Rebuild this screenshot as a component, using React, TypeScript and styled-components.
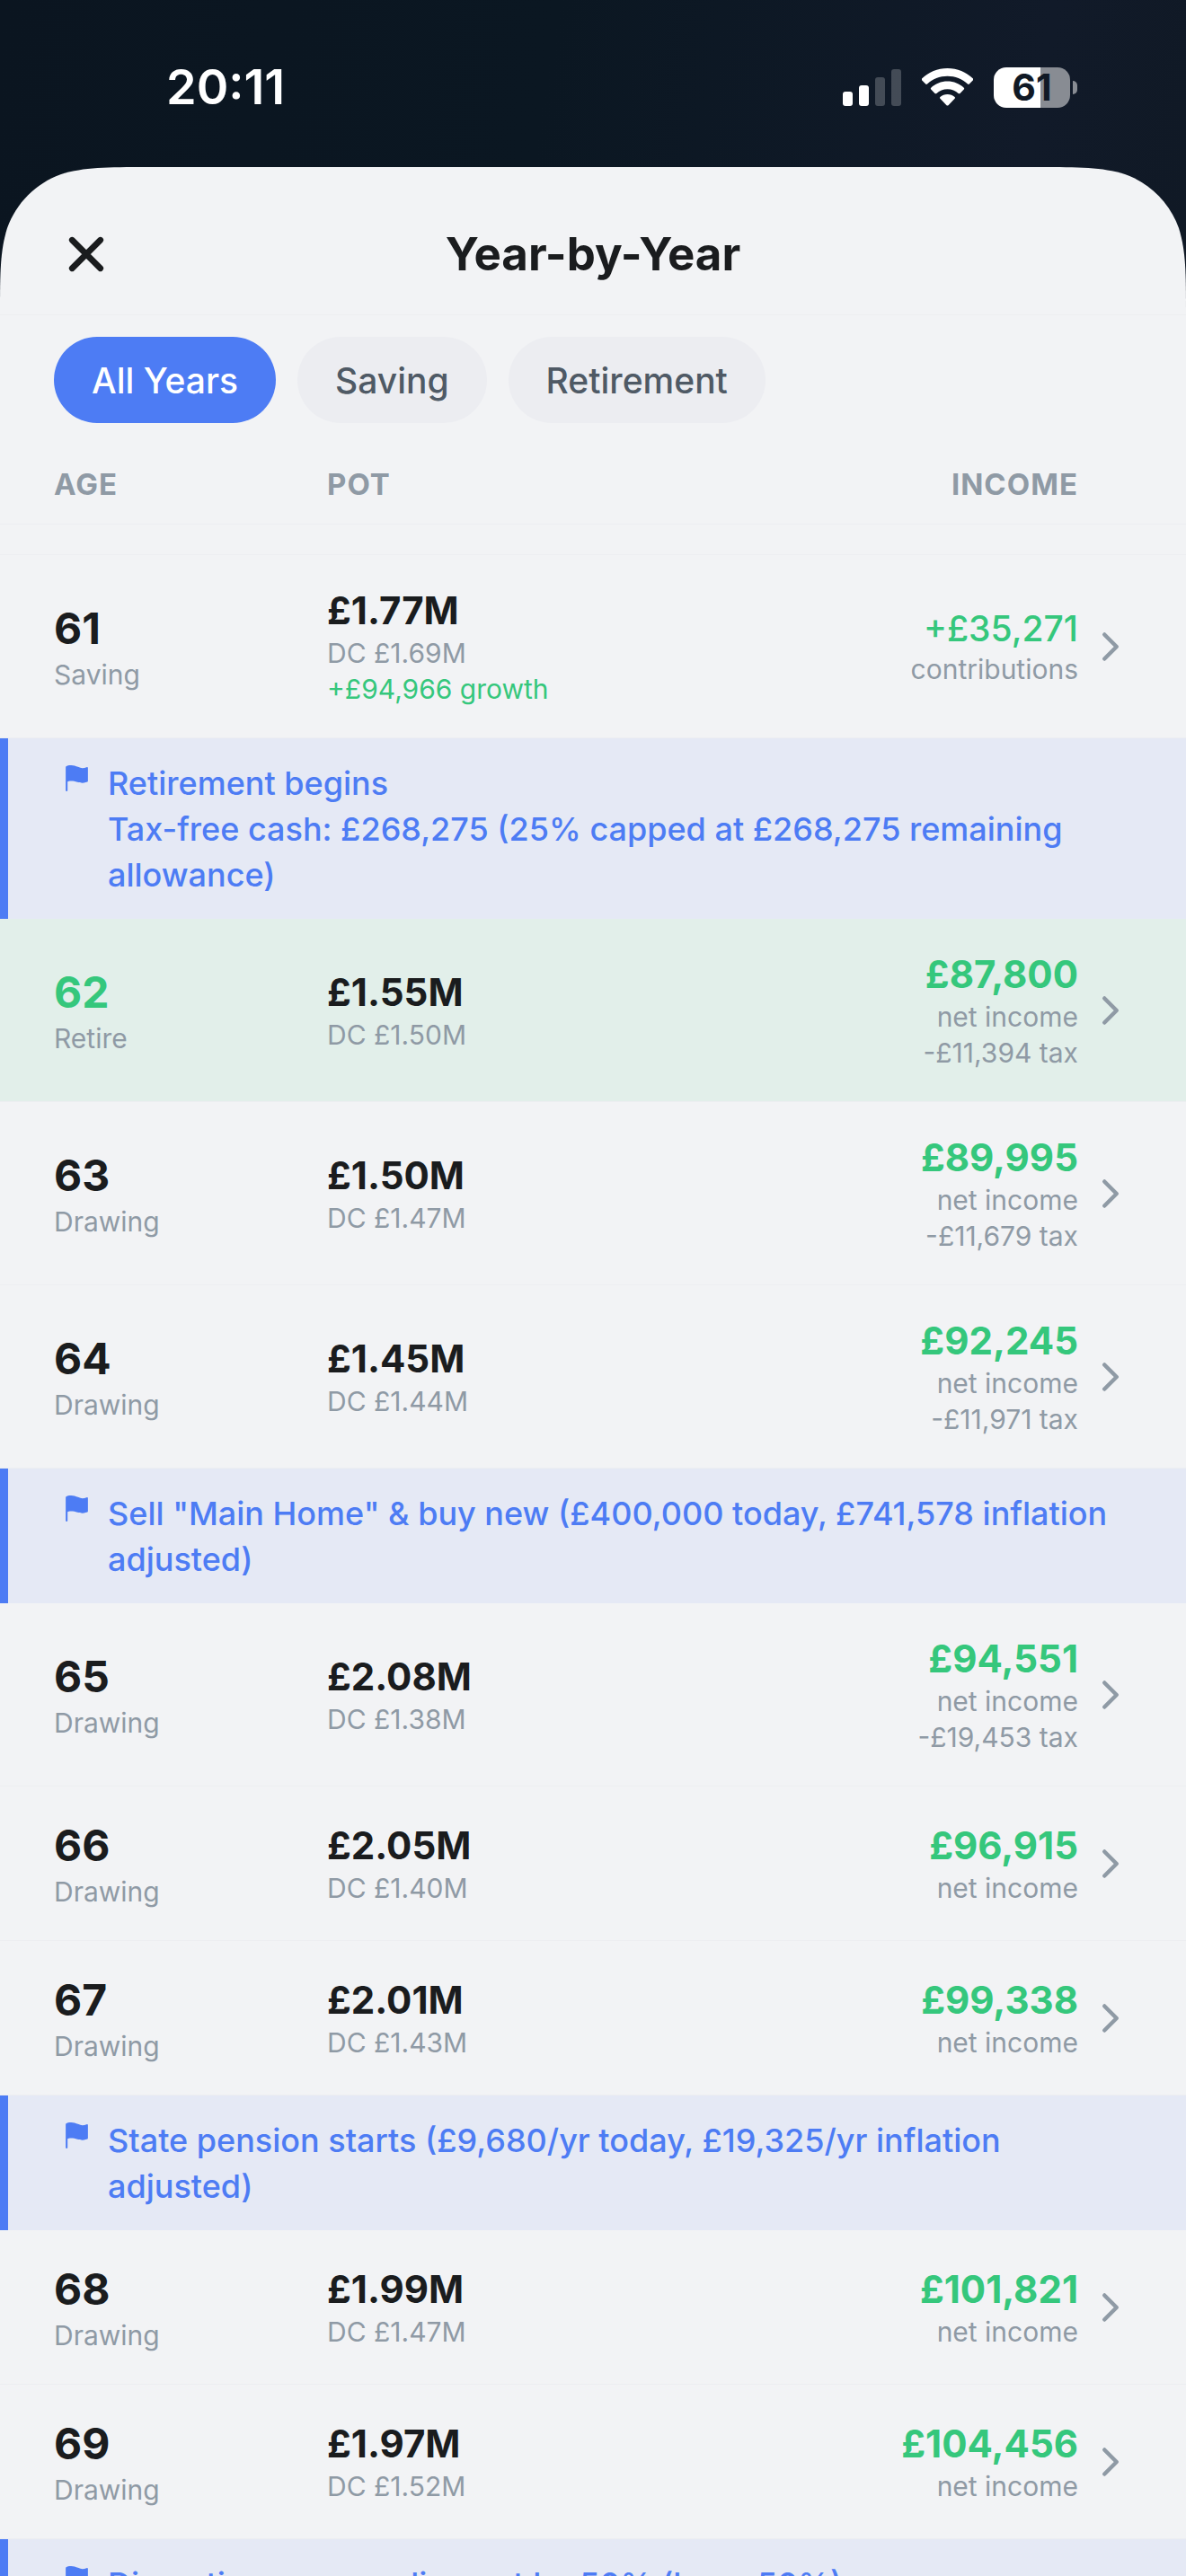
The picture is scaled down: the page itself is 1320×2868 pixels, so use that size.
import React, { useState } from "react";
import styled, { createGlobalStyle } from "styled-components";
import { IoFlag } from "react-icons/io5";

const color = {
  sheet: "#f2f3f5",
  line: "#edeef1",
  chip: "#ecedf1",
  ink: "#1a1c1e",
  slate: "#4f5a65",
  muted: "#8f9aa5",
  blue: "#4d7cf4",
  blueTint: "#e5e9f5",
  green: "#35c77c",
  greenTint: "#e2efea",
};

const GlobalStyle = createGlobalStyle`
  * { box-sizing: border-box; }
  html, body, #root { height: 100%; }
  body {
    margin: 0;
    overflow: hidden;
    background: ${color.sheet};
    color: ${color.ink};
    font-family: Inter, "Liberation Sans", sans-serif;
  }
  h1, p { margin: 0; }
  button { font: inherit; border: 0; padding: 0; background: none; cursor: pointer; }
`;

const Screen = styled.div`
  display: flex;
  flex-direction: column;
  height: 100vh;
  overflow: hidden;
  background: ${color.sheet};
`;

const Backdrop = styled.div`
  background: linear-gradient(100deg, #0b1520 0%, #0b1722 45%, #111a29 85%, #101925 100%);
`;

const StatusBar = styled.div`
  display: flex;
  align-items: center;
  justify-content: space-between;
  height: 186px;
  padding: 8px 121px 0 185px;
  color: #fff;
`;

const Clock = styled.time`
  font-size: 54px;
  font-weight: 600;
  line-height: 64px;
`;

const StatusIcons = styled.div`
  display: flex;
  align-items: center;
  gap: 23px;
`;

const Battery = styled.div`
  display: flex;
  align-items: center;
  gap: 3px;
`;

const BatteryBody = styled.div`
  display: grid;
  place-items: center;
  width: 85px;
  height: 45px;
  border-radius: 14px;
  background: linear-gradient(90deg, #fff 61%, #888c93 61%);
  color: #101925;
  font-size: 41px;
  font-weight: 700;
  line-height: 45px;
`;

const BatteryTip = styled.div`
  width: 5px;
  height: 15px;
  border-radius: 0 5px 5px 0;
  background: #888c93;
`;

const SheetHeader = styled.header`
  position: relative;
  display: grid;
  grid-template-columns: 72px 1fr 72px;
  align-items: center;
  padding: 61px 60px 31px;
`;

const SheetTop = styled.div`
  position: absolute;
  inset: 0;
  display: flex;
  svg { flex: none; display: block; }
`;

const SheetTopFill = styled.div`
  flex: 1;
  background: ${color.sheet};
`;

const FlippedCorner = styled.svg`
  transform: scaleX(-1);
`;

const CloseButton = styled.button`
  position: relative;
  width: 72px;
  height: 72px;
  color: ${color.ink};
  svg { display: block; }
`;

const Title = styled.h1`
  position: relative;
  text-align: center;
  font-size: 51px;
  font-weight: 700;
  line-height: 62px;
`;

const Filters = styled.div`
  position: relative;
  display: flex;
  gap: 24px;
  padding: 24px 60px;
  border-top: 1px solid ${color.line};
`;

const Chip = styled.button<{ $active: boolean }>`
  height: 96px;
  padding: 0 42px;
  border-radius: 48px;
  background: ${(p) => (p.$active ? color.blue : color.chip)};
  color: ${(p) => (p.$active ? "#fff" : color.slate)};
  font-size: 39px;
  font-weight: 500;
  line-height: 47px;
`;

const columns = "304px 1fr auto 48px";

const ColumnHeads = styled.div`
  display: grid;
  grid-template-columns: ${columns};
  padding: 24px 60px;
  border-bottom: 1px solid ${color.line};
  color: ${color.muted};
  font-size: 33px;
  font-weight: 700;
  line-height: 40px;
  letter-spacing: 1px;
`;

const IncomeHead = styled.span`
  padding-right: 12px;
`;

const List = styled.div`
  margin-top: 33px;
  border-top: 1px solid ${color.line};
`;

const YearRow = styled.button<{ $highlight: boolean }>`
  display: grid;
  grid-template-columns: ${columns};
  align-items: center;
  width: 100%;
  padding: 36px 60px;
  border-bottom: 1px solid ${color.line};
  background: ${(p) => (p.$highlight ? color.greenTint : "transparent")};
  color: ${color.ink};
  text-align: left;
  svg { display: block; color: ${color.muted}; }
`;

const Cell = styled.span<{ $end?: boolean }>`
  display: flex;
  flex-direction: column;
  gap: 4px;
  align-items: ${(p) => (p.$end ? "flex-end" : "flex-start")};
  padding-right: ${(p) => (p.$end ? "12px" : "0")};
`;

const Age = styled.span<{ $highlight: boolean }>`
  color: ${(p) => (p.$highlight ? color.green : color.ink)};
  font-size: 48px;
  font-weight: 700;
  line-height: 59px;
`;

const Amount = styled.span<{ $green?: boolean }>`
  color: ${(p) => (p.$green ? color.green : color.ink)};
  font-size: 42px;
  font-weight: 700;
  line-height: 51px;
`;

const Contribution = styled.span`
  color: ${color.green};
  font-size: 39px;
  font-weight: 500;
  line-height: 47px;
`;

const Note = styled.span<{ $green?: boolean }>`
  color: ${(p) => (p.$green ? color.green : color.muted)};
  font-size: 30px;
  line-height: 36px;
`;

const Banner = styled.div`
  display: flex;
  gap: 18px;
  padding: 25px 60px 23px;
  border-left: 9px solid ${color.blue};
  background: ${color.blueTint};
  color: ${color.blue};
  svg { flex: none; margin-top: 3px; }
`;

const BannerText = styled.p`
  flex: 1;
  font-size: 36px;
  font-weight: 500;
  line-height: 51px;
  white-space: pre-line;
`;

type Year = {
  kind: "year";
  age: number;
  phase: string;
  pot: string;
  dc: string;
  growth?: string;
  contribution?: string;
  income?: string;
  tax?: string;
};
type Milestone = { kind: "milestone"; text: string };

const entries: (Year | Milestone)[] = [
  { kind: "year", age: 61, phase: "Saving", pot: "£1.77M", dc: "£1.69M", growth: "+£94,966 growth", contribution: "+£35,271" },
  { kind: "milestone", text: "Retirement begins\nTax-free cash: £268,275 (25% capped at £268,275 remaining allowance)" },
  { kind: "year", age: 62, phase: "Retire", pot: "£1.55M", dc: "£1.50M", income: "£87,800", tax: "-£11,394 tax" },
  { kind: "year", age: 63, phase: "Drawing", pot: "£1.50M", dc: "£1.47M", income: "£89,995", tax: "-£11,679 tax" },
  { kind: "year", age: 64, phase: "Drawing", pot: "£1.45M", dc: "£1.44M", income: "£92,245", tax: "-£11,971 tax" },
  { kind: "milestone", text: 'Sell "Main Home" & buy new (£400,000 today, £741,578 inflation adjusted)' },
  { kind: "year", age: 65, phase: "Drawing", pot: "£2.08M", dc: "£1.38M", income: "£94,551", tax: "-£19,453 tax" },
  { kind: "year", age: 66, phase: "Drawing", pot: "£2.05M", dc: "£1.40M", income: "£96,915" },
  { kind: "year", age: 67, phase: "Drawing", pot: "£2.01M", dc: "£1.43M", income: "£99,338" },
  { kind: "milestone", text: "State pension starts (£9,680/yr today, £19,325/yr inflation adjusted)" },
  { kind: "year", age: 68, phase: "Drawing", pot: "£1.99M", dc: "£1.47M", income: "£101,821" },
  { kind: "year", age: 69, phase: "Drawing", pot: "£1.97M", dc: "£1.52M", income: "£104,456" },
  { kind: "milestone", text: "Discretionary spending cut by 50% (keep 50%)" },
];

const filters = ["All Years", "Saving", "Retirement"];

const cornerPath = "M0 165C0 118 0 94 8 68C18 40 40 18 68 8C94 0 118 0 165 0V165Z";

function SignalIcon() {
  return (
    <svg width="65" height="41" viewBox="0 0 65 41" fill="#fff" aria-hidden="true">
      <rect x="0" y="25" width="11" height="16" rx="3" />
      <rect x="18" y="18" width="11" height="23" rx="3" />
      <rect x="36" y="9" width="11" height="32" rx="3" opacity="0.22" />
      <rect x="54" y="0" width="11" height="41" rx="3" opacity="0.22" />
    </svg>
  );
}

function WifiIcon() {
  return (
    <svg width="57" height="42" viewBox="0 0 57 42" fill="#fff" aria-hidden="true">
      <path d="M28.500 0C39.500 0 49.500 4.300 57 11.500Q57.800 12.400 57 13.300L52.800 17.500Q52 18.300 51 17.500C45 12 37.200 8.800 28.500 8.800S12 12 6 17.500Q5 18.300 4.200 17.500L0 13.300Q-.8 12.400 0 11.500C7.500 4.300 17.500 0 28.500 0Z" />
      <path d="M28.500 14.600C35.500 14.600 42 17.300 46.800 21.800Q47.700 22.700 46.800 23.600L42.500 27.900Q41.600 28.700 40.600 27.900C37.400 25 33.200 23.300 28.500 23.300S19.600 25 16.400 27.900Q15.400 28.700 14.500 27.900L10.200 23.600Q9.300 22.700 10.200 21.800C15 17.300 21.500 14.600 28.500 14.600Z" />
      <path d="M28.500 28.900C31.600 28.900 34.500 30 36.600 31.900Q37.500 32.800 36.600 33.700L29.500 41.200Q28.500 42 27.500 41.200L20.400 33.700Q19.500 32.800 20.400 31.900C22.500 30 25.400 28.900 28.500 28.900Z" />
    </svg>
  );
}

function ChevronIcon() {
  return (
    <svg width="48" height="48" viewBox="0 0 512 512" fill="none" stroke="currentColor" strokeWidth="48" strokeLinecap="round" strokeLinejoin="round" aria-hidden="true">
      <path d="M184 112l144 144-144 144" />
    </svg>
  );
}

function CloseIcon() {
  return (
    <svg width="72" height="72" viewBox="0 0 512 512" fill="none" stroke="currentColor" strokeWidth="48" strokeLinecap="round" aria-hidden="true">
      <path d="M368 368L144 144M368 144L144 368" />
    </svg>
  );
}

function YearEntry({ year }: { year: Year }) {
  const highlight = year.phase === "Retire";
  return (
    <YearRow type="button" $highlight={highlight}>
      <Cell>
        <Age $highlight={highlight}>{year.age}</Age>
        <Note>{year.phase}</Note>
      </Cell>
      <Cell>
        <Amount>{year.pot}</Amount>
        <Note>DC {year.dc}</Note>
        {year.growth && <Note $green>{year.growth}</Note>}
      </Cell>
      <Cell $end>
        {year.contribution ? (
          <Contribution>{year.contribution}</Contribution>
        ) : (
          <Amount $green>{year.income}</Amount>
        )}
        <Note>{year.contribution ? "contributions" : "net income"}</Note>
        {year.tax && <Note>{year.tax}</Note>}
      </Cell>
      <ChevronIcon />
    </YearRow>
  );
}

export default function App() {
  const [filter, setFilter] = useState(filters[0]);
  return (
    <>
      <GlobalStyle />
      <Screen>
        <Backdrop>
          <StatusBar>
            <Clock>20:11</Clock>
            <StatusIcons>
              <SignalIcon />
              <WifiIcon />
              <Battery>
                <BatteryBody>61</BatteryBody>
                <BatteryTip />
              </Battery>
            </StatusIcons>
          </StatusBar>
          <SheetHeader>
            <SheetTop>
              <svg width="165" height="165" viewBox="0 0 165 165" fill={color.sheet} aria-hidden="true">
                <path d={cornerPath} />
              </svg>
              <SheetTopFill />
              <FlippedCorner width="165" height="165" viewBox="0 0 165 165" fill={color.sheet} aria-hidden="true">
                <path d={cornerPath} />
              </FlippedCorner>
            </SheetTop>
            <CloseButton type="button" aria-label="Close">
              <CloseIcon />
            </CloseButton>
            <Title>Year-by-Year</Title>
          </SheetHeader>
        </Backdrop>
        <Filters>
          {filters.map((name) => (
            <Chip key={name} type="button" $active={name === filter} aria-pressed={name === filter} onClick={() => setFilter(name)}>
              {name}
            </Chip>
          ))}
        </Filters>
        <ColumnHeads>
          <span>AGE</span>
          <span>POT</span>
          <IncomeHead>INCOME</IncomeHead>
        </ColumnHeads>
        <List>
          {entries.map((entry) =>
            entry.kind === "year" ? (
              <YearEntry key={entry.age} year={entry} />
            ) : (
              <Banner key={entry.text}>
                <IoFlag size={33} aria-hidden="true" />
                <BannerText>{entry.text}</BannerText>
              </Banner>
            )
          )}
        </List>
      </Screen>
    </>
  );
}
